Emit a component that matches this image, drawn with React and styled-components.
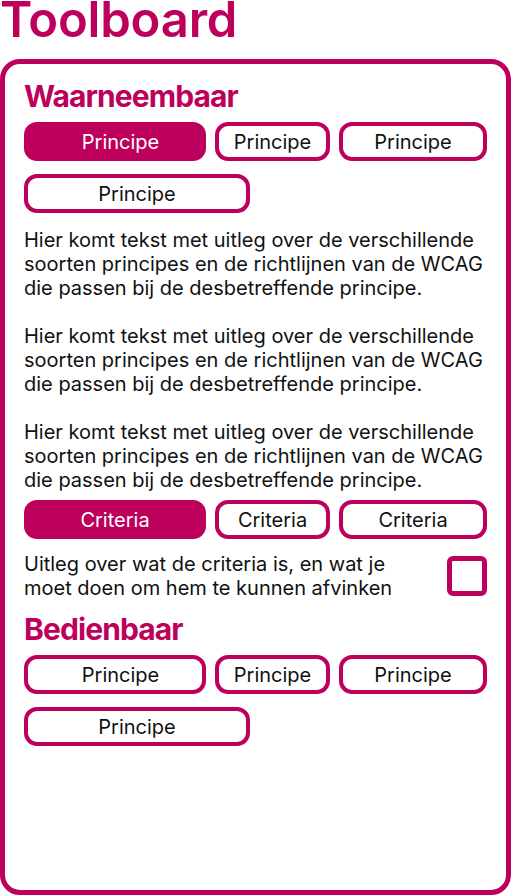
import React from "react";
import styled, { createGlobalStyle } from "styled-components";

const magenta = "#bc005c";

const GlobalStyle = createGlobalStyle`
  html, body {
    margin: 0;
    padding: 0;
    background: #fff;
  }
  body {
    font-family: Inter, "Noto Sans", sans-serif;
    color: #111;
  }
  * {
    box-sizing: border-box;
  }
`;

const sections = [
  {
    title: "Waarneembaar",
    principes: [
      { width: 182, active: true, shift: true },
      { width: 115 },
      { width: 148 },
      { width: 226 },
    ],
    showDetails: true,
  },
  {
    title: "Bedienbaar",
    principes: [
      { width: 182, shift: true },
      { width: 115 },
      { width: 148 },
      { width: 226 },
    ],
    showDetails: false,
  },
];

const criteria = [{ width: 182, active: true }, { width: 115 }, { width: 148 }];

const uitleg =
  "Hier komt tekst met uitleg over de verschillende soorten principes en de richtlijnen van de WCAG die passen bij de desbetreffende principe.";

const Toolboard = () => {
  return (
    <Page>
      <GlobalStyle />
      <Title>Toolboard</Title>
      <Card>
        {sections.map((section) => (
          <Section key={section.title}>
            <Heading>{section.title}</Heading>
            <ButtonGroup>
              {section.principes.map((p, i) => (
                <Pill key={i} $width={p.width} $active={p.active} $shift={p.shift}>
                  Principe
                </Pill>
              ))}
            </ButtonGroup>

            {section.showDetails && (
              <>
                <Explanation>
                  <p>{uitleg}</p>
                  <p>{uitleg}</p>
                  <p>{uitleg}</p>
                </Explanation>
                <CriteriaGroup>
                  {criteria.map((c, i) => (
                    <Pill key={i} $width={c.width} $active={c.active}>
                      Criteria
                    </Pill>
                  ))}
                </CriteriaGroup>
                <CriteriaRow>
                  <CriteriaText>
                    Uitleg over wat de criteria is, en wat je moet doen om hem
                    te kunnen afvinken
                  </CriteriaText>
                  <Checkbox type="checkbox" aria-label="Criteria afvinken" />
                </CriteriaRow>
              </>
            )}
          </Section>
        ))}
      </Card>
    </Page>
  );
};

// Styled Components
const Page = styled.div`
  display: flex;
  flex-direction: column;
  min-height: 100vh;
`;

const Title = styled.h1`
  margin: 0 0 19px;
  font-size: 49px;
  line-height: 40px;
  font-weight: 600;
  letter-spacing: -0.2px;
  color: ${magenta};
`;

const Card = styled.main`
  flex: 1;
  display: flex;
  flex-direction: column;
  border: 5px solid ${magenta};
  border-radius: 20px;
  padding: 14px 19px;
`;

const Section = styled.section`
  display: flex;
  flex-direction: column;

  & + & {
    margin-top: 11px;
  }
`;

const Heading = styled.h2`
  margin: 0 0 8px;
  font-size: 30px;
  line-height: 36px;
  font-weight: 700;
  letter-spacing: -0.9px;
  color: ${magenta};
`;

const ButtonGroup = styled.div`
  display: flex;
  flex-wrap: wrap;
  column-gap: 9px;
  row-gap: 13px;
`;

const CriteriaGroup = styled(ButtonGroup)`
  margin-top: 8px;
`;

const Pill = styled.button`
  width: ${(p) => p.$width}px;
  height: 39px;
  padding: 0 0 0 ${(p) => (p.$shift ? 11 : 0)}px;
  border: 4px solid ${magenta};
  border-radius: 13px;
  background: ${(p) => (p.$active ? magenta : "#fff")};
  color: ${(p) => (p.$active ? "#fff" : "#111")};
  font-family: Inter, "Noto Sans", sans-serif;
  font-size: 20px;
  line-height: 1;
  cursor: pointer;
`;

const Explanation = styled.div`
  margin-top: 15px;
  display: flex;
  flex-direction: column;
  gap: 24px;

  p {
    margin: 0;
    font-size: 20px;
    line-height: 24px;
  }
`;

const CriteriaRow = styled.div`
  margin-top: 13px;
  display: flex;
  align-items: center;
  justify-content: space-between;
  gap: 20px;
`;

const CriteriaText = styled.p`
  margin: 0;
  max-width: 400px;
  font-size: 20px;
  line-height: 24px;
`;

const Checkbox = styled.input`
  appearance: none;
  margin: 0;
  width: 40px;
  height: 40px;
  flex-shrink: 0;
  border: 5px solid ${magenta};
  border-radius: 6px;
  background: #fff;
  cursor: pointer;
`;

export default Toolboard;
